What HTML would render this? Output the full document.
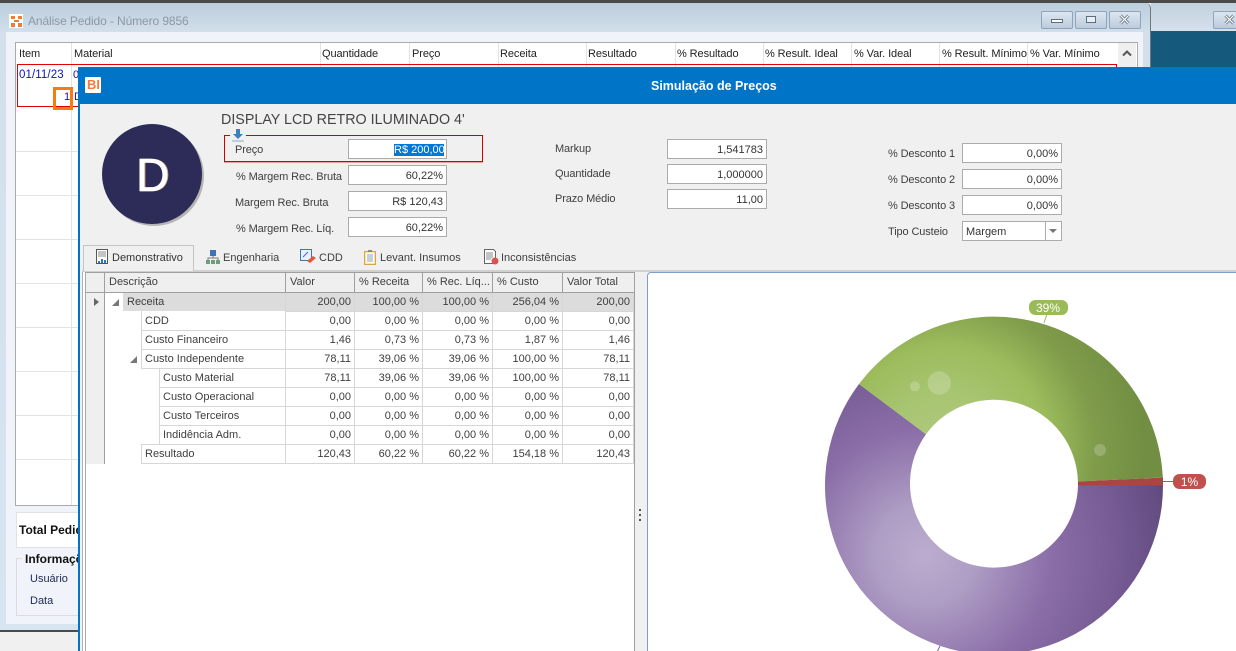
<!DOCTYPE html>
<html><head><meta charset="utf-8"><style>
html,body{margin:0;padding:0;width:1236px;height:651px;overflow:hidden}
body{position:relative;background:#f0f0f0;font:11px "Liberation Sans",sans-serif;color:#3e3e3e}
div,span,svg{position:absolute}
.t{white-space:nowrap;line-height:14px}
.h{color:#222;top:47px;letter-spacing:-.08px}
.gl{background:#e3e3e3}
.in{background:#fff;border:1px solid #ababab;box-sizing:border-box;text-align:right;padding-right:3px;line-height:20px;width:100px;height:20px;color:#333}
.lb{color:#3e3e3e;letter-spacing:-.12px}
.c{box-sizing:border-box;border-right:1px solid #d6d6d6;border-bottom:1px solid #d6d6d6;height:19px;line-height:18px;text-align:right;padding-right:3px;white-space:nowrap;color:#3e3e3e}
.hd{box-sizing:border-box;top:272px;height:21px;border-right:1px solid #a0a0a0;border-bottom:1px solid #a0a0a0;border-top:1px solid #a0a0a0;background:#efefef;line-height:19px;padding-left:4px;color:#3e3e3e;white-space:nowrap;overflow:hidden}
.wb{box-sizing:border-box;border:1px solid #8fa3bb;border-radius:2px;background:linear-gradient(#dce6f0,#bccbdc);height:18px;top:11px}
</style></head><body>
<div style="left:0;top:0;width:1236px;height:3px;background:#4a4a4a"></div>
<div style="left:1151px;top:3px;width:85px;height:28px;background:linear-gradient(#c2d1df,#d5e1ec)"></div>
<div style="left:1151px;top:31px;width:85px;height:36px;background:#155a7c"></div>
<div class="wb" style="left:1213px;width:40px;height:18px"></div>
<svg style="left:1224px;top:14px" width="12" height="11"><path d="M1.500 1.500L9.500 9.500M9.500 1.500L1.500 9.500" stroke="#6b7b8c" stroke-width="3" fill="none"/><path d="M1.500 1.500L9.500 9.500M9.500 1.500L1.500 9.500" stroke="#fff" stroke-width="1.200" fill="none"/></svg>

<div style="left:0;top:3px;width:1150px;height:627px;background:linear-gradient(#bccddc 0,#d3e0ec 30px,#d7e4f1 100%);border-right:1px solid #6d7780;border-top-right-radius:5px"></div>
<div style="left:0;top:630px;width:80px;height:2px;background:#4a4a4a"></div>
<div style="left:6px;top:32px;width:1137px;height:592px;background:#f0f3f9"></div>
<div style="left:9px;top:14px;width:14px;height:14px;background:#fff"></div>
<svg style="left:11px;top:16px" width="11" height="11" viewBox="0 0 11 11"><path d="M0 0h4v3H0zM7 0h4v3H7zM3 4h5v2H3zM0 7h4v4H0zM7 7h4v4H7z" fill="#f07d32"/></svg>
<span class="t" style="left:28px;top:14px;font-size:12px;color:#8d98a3;letter-spacing:-.1px">Análise Pedido - Número 9856</span>
<div class="wb" style="left:1041px;width:32px"></div>
<div style="left:1051px;top:19px;width:10px;height:2px;background:#fff;border:1px solid #5d6d7e"></div>
<div class="wb" style="left:1075px;width:32px"></div>
<div style="left:1086px;top:16px;width:8px;height:5px;border:1px solid #5d6d7e;background:#e9eef4"></div>
<div class="wb" style="left:1109px;width:32px"></div>
<svg style="left:1119px;top:14px" width="12" height="11"><path d="M1.500 1.500L9.500 9.500M9.500 1.500L1.500 9.500" stroke="#6b7b8c" stroke-width="3" fill="none"/><path d="M1.500 1.500L9.500 9.500M9.500 1.500L1.500 9.500" stroke="#fff" stroke-width="1.200" fill="none"/></svg>

<div style="left:15px;top:42px;width:1121px;height:462px;background:#fff;border:1px solid #ababab"></div>
<div style="left:71px;top:43px;width:1px;height:462px;background:#e3e3e3"></div>
<div class="gl" style="left:320px;top:43px;width:1px;height:24px"></div>
<div class="gl" style="left:409px;top:43px;width:1px;height:24px"></div>
<div class="gl" style="left:498px;top:43px;width:1px;height:24px"></div>
<div class="gl" style="left:586px;top:43px;width:1px;height:24px"></div>
<div class="gl" style="left:675px;top:43px;width:1px;height:24px"></div>
<div class="gl" style="left:763px;top:43px;width:1px;height:24px"></div>
<div class="gl" style="left:851px;top:43px;width:1px;height:24px"></div>
<div class="gl" style="left:939px;top:43px;width:1px;height:24px"></div>
<div class="gl" style="left:1027px;top:43px;width:1px;height:24px"></div>
<div style="left:1118px;top:43px;width:18px;height:24px;background:#efefef"></div>
<svg style="left:1122px;top:50px" width="10" height="7"><path d="M1 5.500L5 1.500L9 5.500" fill="none" stroke="#555" stroke-width="2"/></svg>
<span class="t h" style="left:19px">Item</span>
<span class="t h" style="left:74px">Material</span>
<span class="t h" style="left:322px">Quantidade</span>
<span class="t h" style="left:412px">Preço</span>
<span class="t h" style="left:500px">Receita</span>
<span class="t h" style="left:588px">Resultado</span>
<span class="t h" style="left:677px">% Resultado</span>
<span class="t h" style="left:765px">% Result. Ideal</span>
<span class="t h" style="left:854px">% Var. Ideal</span>
<span class="t h" style="left:942px">% Result. Mínimo</span>
<span class="t h" style="left:1030px">% Var. Mínimo</span>
<div style="left:17px;top:64px;width:1098px;height:41px;border:1px solid #e00000"></div>
<span class="t" style="left:19px;top:68px;color:#1212b4;font-size:11.500px;letter-spacing:.1px">01/11/23</span>
<span class="t" style="left:73px;top:68px;color:#1212b4">0</span>
<span class="t" style="left:64px;top:90px;color:#1212b4">1</span>
<span class="t" style="left:74px;top:90px;color:#1212b4">D</span>
<div style="left:53px;top:87px;width:14px;height:17px;border:3px solid #f47c12"></div>
<div class="gl" style="left:16px;top:151px;width:62px;height:1px"></div>
<div class="gl" style="left:16px;top:195px;width:62px;height:1px"></div>
<div class="gl" style="left:16px;top:239px;width:62px;height:1px"></div>
<div class="gl" style="left:16px;top:283px;width:62px;height:1px"></div>
<div class="gl" style="left:16px;top:327px;width:62px;height:1px"></div>
<div class="gl" style="left:16px;top:371px;width:62px;height:1px"></div>
<div class="gl" style="left:16px;top:415px;width:62px;height:1px"></div>
<div class="gl" style="left:16px;top:459px;width:62px;height:1px"></div>
<div style="left:16px;top:512px;width:70px;height:34px;background:#fff;border:1px solid #e2e2e2"></div>
<span class="t" style="left:19px;top:523px;font-weight:bold;color:#111;font-size:12px">Total Pedido</span>
<div style="left:16px;top:558px;width:70px;height:56px;border:1px solid #dcdcdc"></div>
<div style="left:22px;top:552px;width:60px;height:14px;background:#f0f3f9"></div>
<span class="t" style="left:25px;top:552px;font-weight:bold;color:#111;font-size:12px">Informações</span>
<span class="t" style="left:30px;top:572px;color:#1c2a55">Usuário</span>
<span class="t" style="left:30px;top:594px;color:#1c2a55">Data</span>

<div style="left:78px;top:67px;width:1158px;height:584px;background:#f0f0f0;border-left:2px solid #0075c8;box-sizing:border-box"></div>
<div style="left:78px;top:67px;width:1158px;height:37px;background:#0075c8"></div>
<div style="left:85px;top:77px;width:16px;height:16px;background:#fff;border-radius:1px"></div>
<span class="t" style="left:87px;top:78px;font-weight:bold;font-size:13px;color:#f47c3c">BI</span>
<span class="t" style="left:651px;top:79px;font-weight:bold;font-size:12.500px;color:#fff">Simulação de Preços</span>

<div style="left:104px;top:126px;width:100px;height:100px;border-radius:50%;background:#b5b5b5"></div>
<div style="left:102px;top:124px;width:100px;height:100px;border-radius:50%;background:#2d2c58"></div>
<span class="t" style="left:137px;top:149px;font-size:46px;line-height:52px;color:#c9a98d;-webkit-text-stroke:.6px #c9a98d">D</span>
<span class="t" style="left:136px;top:149px;font-size:46px;line-height:52px;color:#fff;-webkit-text-stroke:.6px #fff">D</span>
<span class="t" style="left:221px;top:112px;font-size:14.300px;line-height:16px;color:#444">DISPLAY LCD RETRO ILUMINADO 4'</span>
<div style="left:224px;top:135px;width:257px;height:25px;border:1px solid #d00000;box-shadow:0 1px 0 #e9a0a0"></div>
<div style="left:230px;top:128px;width:16px;height:14px;background:#f0f0f0"></div>
<svg style="left:231px;top:129px" width="14" height="13"><path d="M5 0h4v5h3L7 10 2 5h3z" fill="#3f7fbc"/><path d="M1 12h12" stroke="#8aa9c6"/></svg>
<span class="t lb" style="left:235px;top:143px">Preço</span>
<div class="in" style="left:348px;top:139px;width:99px"></div>
<div style="left:394px;top:144px;width:50px;height:12px;background:#0078d7"></div>
<span class="t" style="left:394px;top:143px;color:#fff">R$ 200,00</span>
<span class="t lb" style="left:236px;top:170px">% Margem Rec. Bruta</span>
<div class="in" style="left:348px;top:165px;width:99px">60,22%</div>
<span class="t lb" style="left:235px;top:196px">Margem Rec. Bruta</span>
<div class="in" style="left:348px;top:191px;width:99px">R$ 120,43</div>
<span class="t lb" style="left:236px;top:222px">% Margem Rec. Líq.</span>
<div class="in" style="left:348px;top:217px;width:99px">60,22%</div>
<span class="t lb" style="left:555px;top:142px">Markup</span>
<div class="in" style="left:667px;top:139px">1,541783</div>
<span class="t lb" style="left:555px;top:167px">Quantidade</span>
<div class="in" style="left:667px;top:164px">1,000000</div>
<span class="t lb" style="left:555px;top:192px">Prazo Médio</span>
<div class="in" style="left:667px;top:189px">11,00</div>
<span class="t lb" style="left:888px;top:147px">% Desconto 1</span>
<div class="in" style="left:962px;top:143px">0,00%</div>
<span class="t lb" style="left:888px;top:173px">% Desconto 2</span>
<div class="in" style="left:962px;top:169px">0,00%</div>
<span class="t lb" style="left:888px;top:199px">% Desconto 3</span>
<div class="in" style="left:962px;top:195px">0,00%</div>
<span class="t lb" style="left:888px;top:225px">Tipo Custeio</span>
<div class="in" style="left:962px;top:221px;text-align:left;padding-left:3px">Margem</div>
<div style="left:1045px;top:222px;width:1px;height:18px;background:#ababab"></div>
<svg style="left:1049px;top:229px" width="9" height="5"><path d="M0 0h8L4 4z" fill="#777"/></svg>

<div style="left:82px;top:270px;width:1154px;height:2px;background:#d0d0d0"></div>
<div style="left:83px;top:245px;width:111px;height:26px;box-sizing:border-box;border:1px solid #c4c4c4;border-bottom:none;background:#f0f0f0"></div>
<svg style="left:96px;top:249px" width="13" height="16"><path d="M.5.500h11v14H.5z" fill="#fff" stroke="#555"/><path d="M2 3h8M2 5h8M2 7h8" stroke="#888"/><path d="M2 12h2v2H2zM5 10h2v4H5zM8 11h2v3H8z" fill="#2d78c4"/></svg>
<span class="t" style="left:112px;top:251px;color:#333">Demonstrativo</span>
<svg style="left:206px;top:250px" width="14" height="14"><path d="M4 0h6v6H4z" fill="#3f74b5"/><path d="M0 10h4v4H0zM5 10h4v4H5zM10 10h4v4h-4z" fill="#6a9f7c"/><path d="M7 6v2M2 10V8h10v2" stroke="#7a7a7a" fill="none"/></svg>
<span class="t" style="left:223px;top:251px">Engenharia</span>
<svg style="left:300px;top:249px" width="17" height="15"><path d="M.5.500h11v11H.5z" fill="#e8f0fa" stroke="#3f74b5"/><path d="M3 8l5-5" stroke="#3f74b5"/><path d="M7 12l6-5 3 2-6 5z" fill="#e2583e"/></svg>
<span class="t" style="left:319px;top:251px">CDD</span>
<svg style="left:364px;top:249px" width="13" height="16"><path d="M.5 2.500h11v13H.5z" fill="#fbe3a8" stroke="#d9a548"/><path d="M2 4h8v10H2z" fill="#fff"/><path d="M3 6h6M3 8h6M3 10h6M3 12h6" stroke="#8aa0b5"/><path d="M4 1h4v2H4z" fill="#8a8a8a"/></svg>
<span class="t" style="left:380px;top:251px">Levant. Insumos</span>
<svg style="left:484px;top:249px" width="15" height="16"><path d="M.5.500h9l2 2v12H.5z" fill="#fff" stroke="#666"/><path d="M2 4h7M2 6h7M2 8h7M2 10h5" stroke="#888"/><circle cx="11" cy="12" r="3.500" fill="#d9534f"/></svg>
<span class="t" style="left:501px;top:251px">Inconsistências</span>

<div style="left:82px;top:272px;width:553px;height:379px;background:#fff;box-sizing:border-box;border-left:1px solid #b0b0b0;border-right:1px solid #a0a0a0"></div>
<div style="left:85px;top:272px;width:1px;height:379px;background:#a8a8a8"></div>
<div style="left:86px;top:293px;width:18px;height:171px;background:#efefef"></div>
<div style="left:104px;top:293px;width:1px;height:171px;background:#a0a0a0"></div>
<div class="hd" style="left:86px;width:19px"></div>
<div class="hd" style="left:105px;width:181px">Descrição</div>
<div class="hd" style="left:286px;width:69px">Valor</div>
<div class="hd" style="left:355px;width:68px">% Receita</div>
<div class="hd" style="left:423px;width:70px">% Rec. Líq...</div>
<div class="hd" style="left:493px;width:70px">% Custo</div>
<div class="hd" style="left:563px;width:72px">Valor Total</div>
<div style="left:123px;top:293px;width:511px;height:18px;background:#dcdcdc"></div>
<div style="left:285px;top:293px;width:1px;height:171px;background:#d6d6d6"></div>
<svg style="left:94px;top:298px" width="6" height="8"><path d="M0 0l5 4-5 4z" fill="#666"/></svg>
<svg style="left:112px;top:299px" width="7" height="7"><path d="M7 0v7H0z" fill="#777"/></svg>
<svg style="left:130px;top:356px" width="7" height="7"><path d="M7 0v7H0z" fill="#777"/></svg>
<div style="left:141px;top:311px;width:1px;height:57px;background:#d6d6d6"></div>
<div style="left:159px;top:368px;width:1px;height:76px;background:#d6d6d6"></div>
<div style="left:141px;top:444px;width:1px;height:20px;background:#d6d6d6"></div>
<div style="left:141px;top:330px;width:144px;height:1px;background:#d6d6d6"></div>
<div style="left:141px;top:349px;width:144px;height:1px;background:#d6d6d6"></div>
<div style="left:141px;top:368px;width:144px;height:1px;background:#d6d6d6"></div>
<div style="left:159px;top:387px;width:126px;height:1px;background:#d6d6d6"></div>
<div style="left:159px;top:406px;width:126px;height:1px;background:#d6d6d6"></div>
<div style="left:159px;top:425px;width:126px;height:1px;background:#d6d6d6"></div>
<div style="left:141px;top:444px;width:144px;height:1px;background:#d6d6d6"></div>
<div style="left:141px;top:463px;width:144px;height:1px;background:#d6d6d6"></div>
<span class="t" style="left:127px;top:295px">Receita</span>
<span class="t" style="left:145px;top:314px">CDD</span>
<span class="t" style="left:145px;top:333px">Custo Financeiro</span>
<span class="t" style="left:145px;top:352px">Custo Independente</span>
<span class="t" style="left:163px;top:371px">Custo Material</span>
<span class="t" style="left:163px;top:390px">Custo Operacional</span>
<span class="t" style="left:163px;top:409px">Custo Terceiros</span>
<span class="t" style="left:163px;top:428px">Indidência Adm.</span>
<span class="t" style="left:145px;top:447px">Resultado</span>

<div class="c" style="left:285px;top:293px;width:70px">200,00</div><div class="c" style="left:354px;top:293px;width:69px">100,00 %</div><div class="c" style="left:423px;top:293px;width:70px">100,00 %</div><div class="c" style="left:492px;top:293px;width:71px">256,04 %</div><div class="c" style="left:562px;top:293px;width:72px">200,00</div>
<div class="c" style="left:285px;top:312px;width:70px">0,00</div><div class="c" style="left:354px;top:312px;width:69px">0,00 %</div><div class="c" style="left:423px;top:312px;width:70px">0,00 %</div><div class="c" style="left:492px;top:312px;width:71px">0,00 %</div><div class="c" style="left:562px;top:312px;width:72px">0,00</div>
<div class="c" style="left:285px;top:331px;width:70px">1,46</div><div class="c" style="left:354px;top:331px;width:69px">0,73 %</div><div class="c" style="left:423px;top:331px;width:70px">0,73 %</div><div class="c" style="left:492px;top:331px;width:71px">1,87 %</div><div class="c" style="left:562px;top:331px;width:72px">1,46</div>
<div class="c" style="left:285px;top:350px;width:70px">78,11</div><div class="c" style="left:354px;top:350px;width:69px">39,06 %</div><div class="c" style="left:423px;top:350px;width:70px">39,06 %</div><div class="c" style="left:492px;top:350px;width:71px">100,00 %</div><div class="c" style="left:562px;top:350px;width:72px">78,11</div>
<div class="c" style="left:285px;top:369px;width:70px">78,11</div><div class="c" style="left:354px;top:369px;width:69px">39,06 %</div><div class="c" style="left:423px;top:369px;width:70px">39,06 %</div><div class="c" style="left:492px;top:369px;width:71px">100,00 %</div><div class="c" style="left:562px;top:369px;width:72px">78,11</div>
<div class="c" style="left:285px;top:388px;width:70px">0,00</div><div class="c" style="left:354px;top:388px;width:69px">0,00 %</div><div class="c" style="left:423px;top:388px;width:70px">0,00 %</div><div class="c" style="left:492px;top:388px;width:71px">0,00 %</div><div class="c" style="left:562px;top:388px;width:72px">0,00</div>
<div class="c" style="left:285px;top:407px;width:70px">0,00</div><div class="c" style="left:354px;top:407px;width:69px">0,00 %</div><div class="c" style="left:423px;top:407px;width:70px">0,00 %</div><div class="c" style="left:492px;top:407px;width:71px">0,00 %</div><div class="c" style="left:562px;top:407px;width:72px">0,00</div>
<div class="c" style="left:285px;top:426px;width:70px">0,00</div><div class="c" style="left:354px;top:426px;width:69px">0,00 %</div><div class="c" style="left:423px;top:426px;width:70px">0,00 %</div><div class="c" style="left:492px;top:426px;width:71px">0,00 %</div><div class="c" style="left:562px;top:426px;width:72px">0,00</div>
<div class="c" style="left:285px;top:445px;width:70px">120,43</div><div class="c" style="left:354px;top:445px;width:69px">60,22 %</div><div class="c" style="left:423px;top:445px;width:70px">60,22 %</div><div class="c" style="left:492px;top:445px;width:71px">154,18 %</div><div class="c" style="left:562px;top:445px;width:72px">120,43</div>

<svg style="left:639px;top:508px" width="3" height="16"><path d="M0 1h2v2H0zM0 6h2v2H0zM0 11h2v2H0z" fill="#555"/></svg>

<div style="left:647px;top:272px;width:589px;height:379px;overflow:hidden"><div style="left:0;top:0;width:600px;height:400px;background:#fff;border:1px solid #7f9fc7;border-radius:4px;box-sizing:border-box"></div></div>
<svg style="left:0;top:0" width="1236" height="651">
<defs>
<radialGradient id="gp" gradientUnits="userSpaceOnUse" cx="925" cy="555" r="250"><stop offset="0" stop-color="#bbadcf"/><stop offset=".2" stop-color="#ae9dc4"/><stop offset=".5" stop-color="#8b6ea8"/><stop offset=".78" stop-color="#755a94"/><stop offset="1" stop-color="#5f4a7c"/></radialGradient>
<radialGradient id="gg" gradientUnits="userSpaceOnUse" cx="945" cy="450" r="200"><stop offset="0" stop-color="#aec97d"/><stop offset=".28" stop-color="#a8c572"/><stop offset=".52" stop-color="#9cbc5c"/><stop offset=".75" stop-color="#7f9c4b"/><stop offset="1" stop-color="#728e42"/></radialGradient>
</defs>
<path d="M859 384A169 169 0 1 0 1163 485.500L1078 485.500A84 84 0 1 1 926 434.300Z" fill="url(#gp)"/>
<path d="M1162.800 477.500A169 169 0 0 0 859 384L926 434.300A84 84 0 0 1 1077.900 481.500Z" fill="url(#gg)"/>
<path d="M1163 477.500V485.500H1078L1077.900 481.500Z" fill="#ab4542"/>
<circle cx="939.300" cy="383" r="11.700" fill="#fff" opacity=".2"/>
<circle cx="915" cy="386.300" r="5" fill="#fff" opacity=".2"/>
<circle cx="1100" cy="450" r="6" fill="#fff" opacity=".2"/>
<path d="M1047 314L1044 323" stroke="#9bbb59"/>
<path d="M1163 481.500H1174" stroke="#c0504d"/>
<path d="M940 646L937 652" stroke="#8064a2"/>
<rect x="1029" y="300" width="39" height="15" rx="6.500" fill="#9bbb59"/>
<rect x="1173" y="474" width="33" height="15" rx="6.500" fill="#c0504d"/>
<text x="1048" y="312" font-family="Liberation Sans" font-size="12" fill="#fff" text-anchor="middle">39%</text>
<text x="1189.500" y="486" font-family="Liberation Sans" font-size="12" fill="#fff" text-anchor="middle">1%</text>
</svg>
</body></html>
